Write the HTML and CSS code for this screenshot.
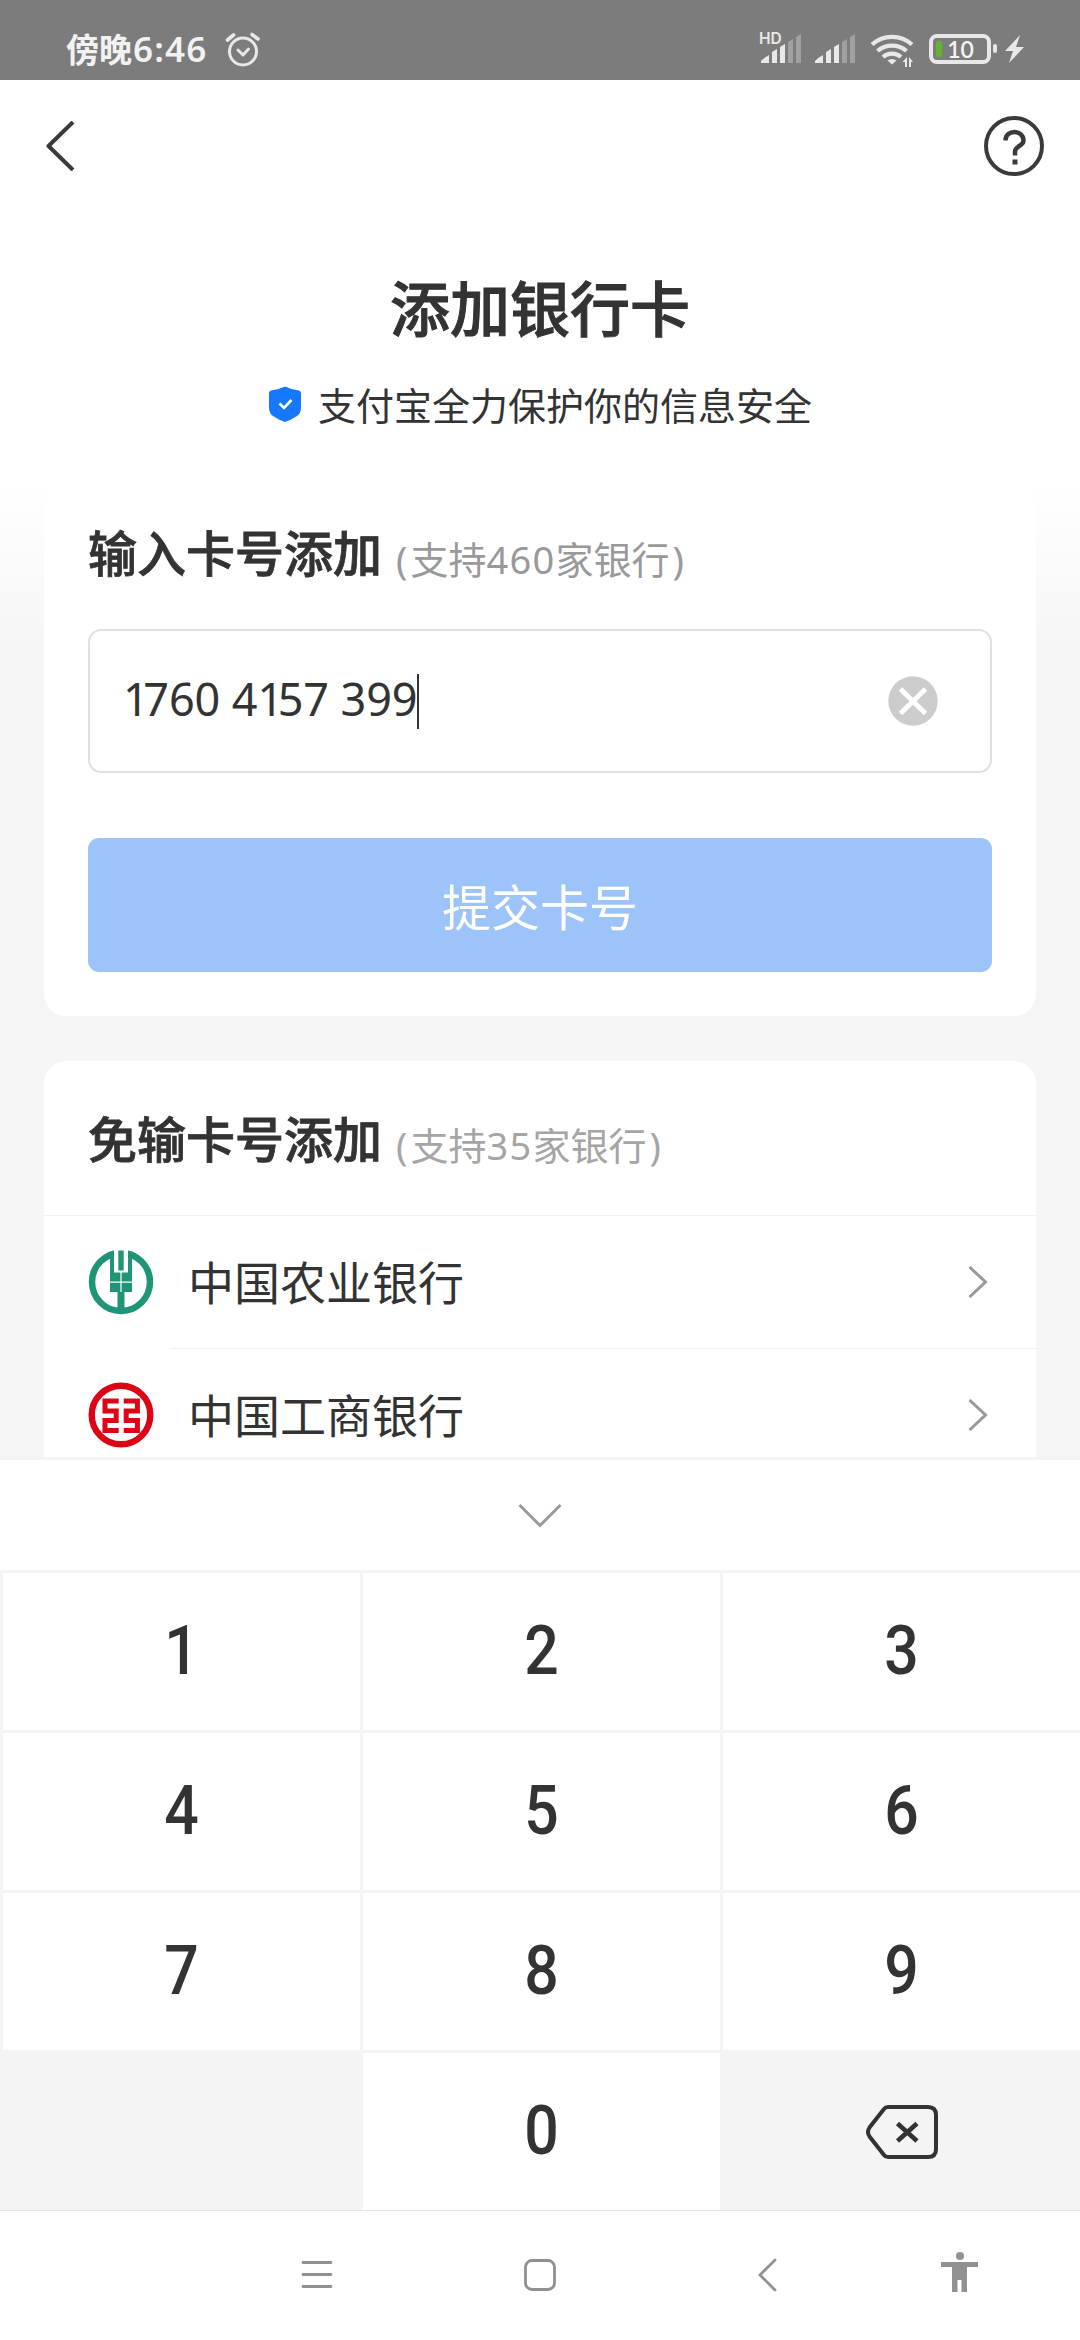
FILE: index.html
```html
<!DOCTYPE html>
<html lang="zh-CN">
<head>
<meta charset="utf-8">
<title>添加银行卡</title>
<link rel="stylesheet" href="styles.css">
</head>
<body>
<header class="status">
  <span class="status-time">傍晚<b>6:46</b></span>
  <svg class="alarm" width="36" height="36" viewBox="0 0 36 36"><g fill="none" stroke="#e8e8e8" stroke-width="3" stroke-linecap="round" stroke-linejoin="round"><circle cx="18" cy="19.500" r="13.500"/><path d="M13 18l5 5 5.500-6"/><path stroke-width="3.600" d="M2.500 8l6-5M33 7l-6-4.500"/></g></svg>
  <div class="status-icons">
    <svg width="274" height="48" viewBox="750 20 274 48">
      <text x="759" y="44" class="hd">HD</text>
      <g fill="#e8e8e8">
        <path d="M761 63v-2q4-4 8-6v8zM772 63v-11l5-3v14zM780 63v-16l5-3v19z"/>
        <path d="M815 63v-2q4-4 8-6v8zM826 63v-11l5-3v14zM834 63v-16l5-3v19z"/>
      </g>
      <path fill="#a0a0a0" d="M788 63v-21l5-3v24zM796 63v-26l5-3v29zM842 63v-21l5-3v24zM850 63v-26l5-3v29z"/>
      <g fill="none" stroke="#e8e8e8" stroke-width="4.200"><path d="M872 44.500a30 30 0 0 1 40 0"/><path d="M877.500 51a22 22 0 0 1 29 0"/><path d="M883 57a13.500 13.500 0 0 1 18 0"/></g>
      <path fill="#e8e8e8" d="M892 64.500l-4.500-4q4.500-3 9 0zM907 57v10h-2v-5h-2.500zM909 67v-10l4 5h-2v5z"/>
      <rect x="931" y="36" width="58" height="26" rx="6" fill="none" stroke="#e8e8e8" stroke-width="4"/>
      <rect x="936" y="41" width="6" height="16" rx="2" fill="#63b32e"/>
      <rect x="993" y="44" width="4" height="9" rx="2" fill="#e8e8e8"/>
      <text x="960.500" y="58" class="battery-level">10</text>
      <path fill="#e8e8e8" d="M1020 35l-15 16h8l-4 12 15-16h-8z"/>
    </svg>
  </div>
</header>
<nav class="topbar">
  <svg width="30" height="50" viewBox="0 0 30 50"><path d="M28 1L3.500 25 28 49" fill="none" stroke="#3a3a3a" stroke-width="4" stroke-linejoin="round"/></svg>
  <svg width="60" height="60" viewBox="0 0 60 60"><g fill="none" stroke="#3a3a3a" stroke-width="4"><circle cx="30" cy="30" r="28"/><path stroke-width="4.500" d="M21.500 24.500c0-11.500 18-11 18 0 0 6-8.500 5-8.500 11v4"/></g><rect x="28.500" y="43.500" width="5" height="5" fill="#3a3a3a"/></svg>
</nav>
<section class="intro">
  <h1>添加银行卡</h1>
  <p class="safe"><svg width="34" height="36" viewBox="0 0 34 36"><path fill="#1677ff" d="M17 0.500Q23 3.500 31 4.500q2 .5 2 2.500v15q0 5-4 8-6 4-12 6-6-2-12-6-4-3-4-8V7q0-2 2-2.500Q11 3.500 17 .5z"/><path d="M11.500 17.500l4.500 4.500 7.500-8" fill="none" stroke="#fff" stroke-width="2.600"/></svg><span>支付宝全力保护你的信息安全</span></p>
</section>
<main class="page">
  <section class="card card-input">
    <h2>输入卡号添加<small><i>(</i>支持<b>460</b>家银行<i>)</i></small></h2>
    <div class="field"><span class="number"><b>1</b>760 4<b>1</b>57 399</span><i class="caret"></i>
      <svg class="clear" width="50" height="50" viewBox="0 0 50 50"><circle cx="25" cy="25" r="24.700" fill="#ccc"/><path d="M12.500 13l25 24.500M37.500 13l-25 24.500" stroke="#fff" stroke-width="5"/></svg>
    </div>
    <button class="submit">提交卡号</button>
  </section>
  <section class="card card-banks">
    <h2>免输卡号添加<small class="light"><i>(</i>支持<b>35</b>家银行<i>)</i></small></h2>
    <div class="bank">
      <svg width="66" height="66" viewBox="0 0 66 66"><circle cx="33" cy="33" r="29" fill="none" stroke="#1f9477" stroke-width="6.500"/><path fill="#fff" d="M26 0h14v10H26z"/><path fill="#1f9477" d="M22 2.500h4v21h14v-21h4V43h-7.500v20h-7V43H22z"/><path fill="#1f9477" d="M30.300 1.500h5.400v20h-5.400z"/><path d="M33 22v21M22 33.200h22" stroke="#fff" stroke-width="1.200"/></svg>
      <span>中国农业银行</span>
      <svg class="go" width="20" height="32" viewBox="0 0 20 32"><path d="M1.500 1L17.500 16 1.500 31" /></svg>
    </div>
    <div class="bank second">
      <svg width="66" height="66" viewBox="0 0 66 66"><circle cx="33" cy="33" r="29.300" fill="none" stroke="#dc0515" stroke-width="6.400"/><path fill="none" stroke="#dc0515" stroke-width="5" d="M30.700 19H17v10h11.200v9.500H17v10h13.700M35.700 19h13.700v10H38.200v9.500h11.200v10H35.700"/></svg>
      <span>中国工商银行</span>
      <svg class="go" width="20" height="32" viewBox="0 0 20 32"><path d="M1.500 1L17.500 16 1.500 31" /></svg>
    </div>
  </section>
</main>
<section class="keyboard">
  <div class="collapse"><svg width="44" height="26" viewBox="0 0 44 26"><path d="M1.500 2L22 22.500 42.500 2" fill="none" stroke="#999" stroke-width="3"/></svg></div>
  <div class="keys">
    <div class="key"><span>1</span></div><div class="key"><span>2</span></div><div class="key"><span>3</span></div>
    <div class="key"><span>4</span></div><div class="key"><span>5</span></div><div class="key"><span>6</span></div>
    <div class="key"><span>7</span></div><div class="key"><span>8</span></div><div class="key"><span>9</span></div>
    <div class="key blank"></div><div class="key"><span>0</span></div>
    <div class="key blank"><svg width="72" height="54" viewBox="0 0 72 54"><path d="M22 2h40q8 0 8 8v34q0 8-8 8H22q-2.500 0-4-2L3.500 31.500Q0.500 27 3.500 22.500L18 4q1.500-2 4-2z" fill="none" stroke="#333" stroke-width="4"/><path d="M31.500 18.500L51 36M51 18.500L31.500 36" stroke="#333" stroke-width="4.600"/></svg></div>
  </div>
</section>
<footer class="sysnav">
  <svg width="680" height="44" viewBox="300 2250 680 44"><g fill="none" stroke="#919191" stroke-width="2.800"><path stroke-linecap="round" d="M303 2262.500h28M303 2274.500h28M303 2286.500h28"/><rect x="525.500" y="2260.500" width="29" height="29" rx="6.500"/><path d="M775 2260l-15 15 15 15" stroke-linecap="round"/></g><path fill="#919191" d="M941 2262h37v5h-11v25h-5.500v-12h-4v12H952v-25h-11z"/><circle cx="960" cy="2256" r="4" fill="#919191"/></svg>
</footer>
</body>
</html>
```
FILE: styles.css
```css
* { box-sizing: border-box; }
body {
  margin: 0;
  width: 1080px;
  height: 2340px;
  overflow: hidden;
  display: flex;
  flex-direction: column;
  background: #fff;
  color: #333;
  font-family: "Noto Sans", "Noto Sans CJK SC", sans-serif;
}
svg { display: block; flex: none; }
h1, h2, p { margin: 0; }
.status {
  height: 80px;
  background: #7c7c7c;
  color: #f2f2f2;
  display: flex;
  align-items: flex-start;
  padding: 20px 56px 0 66px;
}
.status-time { font-size: 33px; line-height: 36px; margin-top: 11px; font-weight: 700; width: 159px; white-space: nowrap; }
.status-time b { font-size: 35px; font-weight: 600; letter-spacing: 1.200px; margin-left: 1px; }
.alarm { margin-top: 12px; }
.status-icons { margin-left: auto; }
.hd { font: 600 15.500px Inter, sans-serif; fill: #e8e8e8; }
.battery-level { font: 600 23px Lato, sans-serif; fill: #f4f4f4; text-anchor: middle; }
.topbar {
  height: 132px;
  display: flex;
  justify-content: space-between;
  align-items: center;
  padding: 0 36px 0 45px;
}
.intro {
  height: 273px;
  padding-top: 53px;
  text-align: center;
}
h1 { font-size: 60px; line-height: 88px; font-weight: 500; -webkit-text-stroke: 1px #333; }
.safe {
  margin-top: 22px;
  display: flex;
  justify-content: center;
  gap: 16px;
  font-size: 38px;
  line-height: 60px;
}
.safe svg { margin-top: 11px; }
.page {
  height: 975px;
  overflow: hidden;
  padding: 0 44px;
  background: linear-gradient(#fff, #f5f5f5 170px);
  display: flex;
  flex-direction: column;
  gap: 45px;
  border-bottom: 3px solid #f4f4f4;
}
.card { background: #fff; flex: none; border-radius: 22px; }
h2 {
  font-size: 49px;
  line-height: 70px;
  font-weight: 500;
  white-space: nowrap;
  -webkit-text-stroke: 0.800px #333;
}
h2 small { position: relative; top: 2px; margin-left: 14px; font-size: 38px; font-weight: 400; color: #999; -webkit-text-stroke: 0; }
h2 small.light { color: #a5a5a5; }
h2 b { font-weight: 400; letter-spacing: 1.300px; }
h2 i { font-style: normal; letter-spacing: 3px; }
h2 i:last-child { margin-left: 3px; }
.card-input { height: 531px; padding: 33px 44px 44px; }
.field {
  margin-top: 37px;
  height: 144px;
  border: 2px solid #e0e0e0;
  border-radius: 13px;
  display: flex;
  align-items: center;
  padding: 0 52px 0 33px;
}
.number { font-size: 45px; line-height: 60px; padding-bottom: 4px; letter-spacing: -0.100px; }
.number b { font-weight: 400; letter-spacing: -5.500px; }
.caret { width: 1.500px; height: 55px; background: #333; }
.clear { margin-left: auto; }
.submit {
  display: block;
  width: 100%;
  height: 134px;
  margin-top: 65px;
  padding: 0 0 2px;
  border: 0;
  border-radius: 11px;
  background: #9dc3fb;
  color: #fff;
  font: 400 49px "Noto Sans CJK SC", sans-serif;
}
.card-banks { height: 480px; }
.card-banks h2 { height: 155px; padding: 43px 44px 0; border-bottom: 1px solid #f0f0f0; }
.bank {
  height: 132px;
  display: flex;
  align-items: center;
  padding: 0 48px 0 44px;
  font-size: 46px;
}
.bank span { margin-left: 34px; padding-bottom: 4px; }
.second { position: relative; height: 133px; }
.second::before { content: ""; position: absolute; left: 126px; right: 0; top: 0; border-top: 1px solid #f0f0f0; }
.go { margin-left: auto; fill: none; stroke: #999; stroke-width: 3; }
.keyboard { background: #f4f4f4; height: 750px; }
.collapse { height: 110px; background: #fff; display: flex; justify-content: center; padding-top: 43px; }
.keys { display: grid; grid-template-columns: repeat(3, 357px); grid-auto-rows: 157px; gap: 3px; padding: 3px 0 0 3px; }
.key { background: #fff; display: flex; align-items: center; justify-content: center; }
.key span { font: 500 69px/1 Roboto, sans-serif; transform: scaleX(.88); padding-bottom: 3px; }
.blank { background: #f4f4f4; }
.sysnav { height: 130px; border-top: 1px solid #e2e2e2; padding: 39px 100px 0 300px; }
```
